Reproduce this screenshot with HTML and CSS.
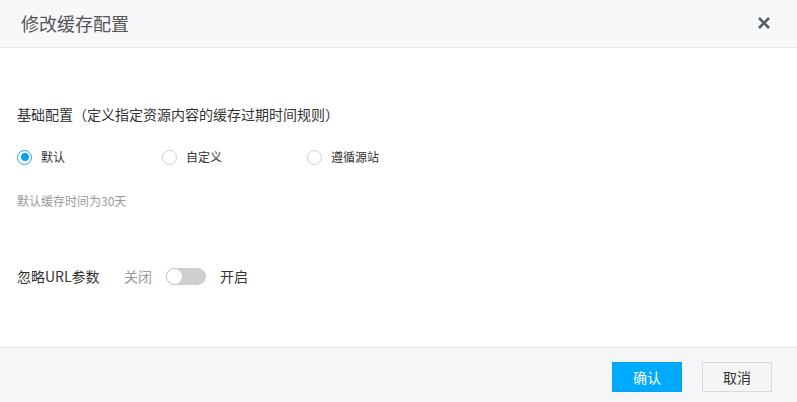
FILE: index.html
```html
<!DOCTYPE html>
<html lang="zh-CN">
<head>
<meta charset="utf-8">
<title>修改缓存配置</title>
<link rel="stylesheet" href="styles.css">
</head>
<body>
<div class="dialog">
  <div class="dialog-header">
    <span class="dialog-title">修改缓存配置</span>
    <span class="close" aria-label="关闭">
      <svg width="14" height="14" viewBox="0 0 14 14"><path d="M2 2 L12 12 M12 2 L2 12" stroke="#545b63" stroke-width="2.6" stroke-linecap="butt"/></svg>
    </span>
  </div>
  <div class="dialog-body">
    <div class="section-title">基础配置（定义指定资源内容的缓存过期时间规则）</div>
    <div class="radio-group">
      <label class="radio checked"><span class="radio-dot"></span><span class="radio-label">默认</span></label>
      <label class="radio"><span class="radio-dot"></span><span class="radio-label">自定义</span></label>
      <label class="radio"><span class="radio-dot"></span><span class="radio-label">遵循源站</span></label>
    </div>
    <div class="hint">默认缓存时间为30天</div>
    <div class="switch-row">
      <span class="switch-label">忽略URL参数</span>
      <span class="off-text">关闭</span>
      <span class="switch"><span class="knob"></span></span>
      <span class="on-text">开启</span>
    </div>
  </div>
  <div class="dialog-footer">
    <button class="btn btn-primary">确认</button>
    <button class="btn btn-default">取消</button>
  </div>
</div>
</body>
</html>
```
FILE: styles.css
```css
* { box-sizing: border-box; }
html, body { margin: 0; padding: 0; }
body {
  width: 797px;
  height: 402px;
  background: #fff;
  font-family: "Noto Sans CJK SC", "Noto Sans", sans-serif;
  color: #333;
  overflow: hidden;
}
.dialog {
  display: flex;
  flex-direction: column;
  height: 402px;
}
.dialog-header {
  height: 48px;
  background: #f7f8fa;
  border-bottom: 1px solid #e6e8eb;
  display: flex;
  align-items: center;
  justify-content: space-between;
  padding: 0 26px 1px 21px;
}
.dialog-title {
  font-size: 18px;
  color: #555;
  line-height: 24px;
}
.close {
  display: flex;
  width: 14px;
  height: 14px;
}
.dialog-body {
  flex: 1;
  padding: 56px 17px 0;
}
.section-title {
  font-size: 14px;
  line-height: 20px;
  color: #333;
}
.radio-group {
  display: flex;
  margin-top: 23px;
  height: 20px;
  align-items: center;
}
.radio {
  width: 145px;
  display: flex;
  align-items: center;
  font-size: 12px;
  color: #333;
}
.radio-dot {
  width: 15px;
  height: 15px;
  border: 1px solid #cfcfcf;
  border-radius: 50%;
  margin-right: 9px;
  display: flex;
  align-items: center;
  justify-content: center;
  background: #fff;
}
.radio.checked .radio-dot {
  border: 1.5px solid #1aa3f5;
}
.radio.checked .radio-dot::after {
  content: "";
  width: 8px;
  height: 8px;
  border-radius: 50%;
  background: #0aa1f5;
}
.radio-label { line-height: 20px; }
.hint {
  margin-top: 24px;
  font-size: 12px;
  line-height: 20px;
  color: #999;
}
.switch-row {
  margin-top: 55px;
  display: flex;
  align-items: center;
  height: 20px;
  font-size: 14px;
}
.switch-label {
  width: 107px;
  color: #333;
}
.off-text { color: #999; }
.switch {
  margin: 0 14px;
  width: 40px;
  height: 17px;
  border-radius: 9px;
  background: #cfcfcf;
  display: flex;
  align-items: center;
  padding-left: 0;
}
.knob {
  width: 17px;
  height: 17px;
  border-radius: 50%;
  background: #fff;
  border: 1px solid #c8c8c8;
}
.on-text { color: #333; }
.dialog-footer {
  height: 55px;
  border-top: 1px solid #e6e8eb;
  background: #f5f6f8;
  display: flex;
  justify-content: flex-end;
  align-items: flex-start;
  gap: 20px;
  padding: 14px 25px 0 0;
}
.btn {
  width: 70px;
  height: 30px;
  font-family: inherit;
  font-size: 14px;
  border-radius: 0;
  cursor: pointer;
  padding: 0;
}
.btn-primary {
  background: #00aaff;
  border: 1px solid #0a9ff0;
  color: #fff;
}
.btn-default {
  background: #f5f5f5;
  border: 1px solid #d9d9d9;
  color: #333;
}
```
